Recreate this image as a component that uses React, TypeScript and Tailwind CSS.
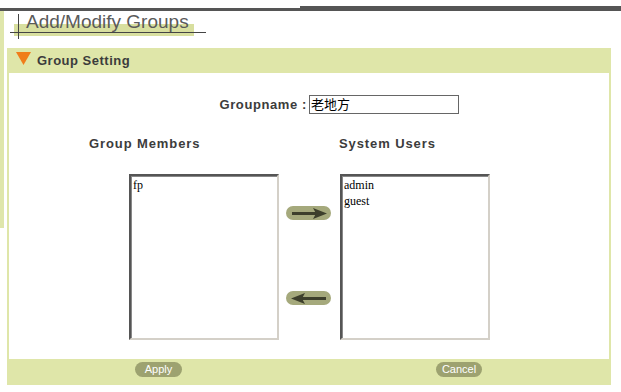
import React from "react";

const Arrow = ({ dir }: { dir: "right" | "left" }) => (
  <div className="w-[45px] h-[14px] rounded-full bg-[#a5a97c] flex items-center justify-center">
    <svg width="40" height="12" viewBox="0 0 40 12">
      {dir === "right" ? (
        <g fill="#3d3f2c">
          <rect x="3" y="5" width="26" height="3" />
          <polygon points="24,1 38,6.5 24,12 27,6.5" />
        </g>
      ) : (
        <g fill="#3d3f2c">
          <rect x="11" y="5" width="26" height="3" />
          <polygon points="16,1 2,6.5 16,12 13,6.5" />
        </g>
      )}
    </svg>
  </div>
);

const ListBox = ({ items }: { items: string[] }) => (
  <div className="w-[150px] h-[166px] bg-white border-2 border-t-[#555] border-l-[#555] border-r-[#d4d0c8] border-b-[#d4d0c8] shadow-[inset_1px_1px_0_#888]">
    <div className="pl-[2px] pt-[1px] text-[12px] leading-[16px] text-black" style={{ fontFamily: '"Liberation Serif", "DejaVu Serif", serif' }}>
      {items.map((i) => (
        <div key={i}>{i}</div>
      ))}
    </div>
  </div>
);

export default function App() {
  const sans = { fontFamily: '"Liberation Sans", Arial, sans-serif' };
  return (
    <div className="w-[621px] h-[392px] bg-white overflow-hidden" style={sans}>
      {/* top bar */}
      <div className="flex items-end h-[11px] pt-[6px]">
        <div className="w-[300px] h-[3px] bg-[#555]" />
        <div className="flex-1 h-[5px] bg-[#555]" />
      </div>
      <div className="flex">
        <div className="w-[4px] h-[217px] bg-[#dfe6ab]" />
        <div className="w-[3px]" />
        <div className="w-[604px]">
          {/* title */}
          <div className="relative h-[37px]">
            <div className="absolute left-[7px] top-[13px] w-[180px] h-[12px] bg-[#d8df9f]" />
            <div className="absolute left-[3px] top-[21px] w-[196px] h-px bg-[#444]" />
            <div className="absolute left-[11px] top-[3px] w-px h-[25px] bg-[#444]" />
            <div className="absolute left-[19px] top-0 text-[19px] leading-[22px] text-[#5a5a5a]">Add/Modify Groups</div>
          </div>
          {/* panel */}
          <div className="w-[604px]">
            <div className="h-[25px] bg-[#dfe6a9] flex items-center">
              <svg width="15" height="13" viewBox="0 0 15 13" className="ml-[9px] mb-[4px]">
                <polygon points="0,0 15,0 7.5,13" fill="#f07d1a" />
              </svg>
              <span className="ml-[6px] text-[13px] font-bold text-[#3c3c3c] tracking-[0.5px]">Group Setting</span>
            </div>
            <div className="h-[286px] border-x-2 border-[#dfe6a9] bg-white flex flex-col">
              <div className="flex items-center mt-[22px]">
                <div className="w-[298px] text-right text-[13px] font-bold text-[#3c3c3c] tracking-[0.6px]">Groupname :</div>
                <div className="ml-[2px] w-[150px] h-[19px] border border-[#666] flex items-center px-[1px] text-[13px] text-black" style={{ fontFamily: '"Liberation Sans", "Noto Sans CJK TC", sans-serif' }}>
                  老地方
                </div>
              </div>
              <div className="flex mt-[19px] h-[16px] text-[13px] font-bold text-[#3c3c3c] tracking-[0.9px]">
                <div className="ml-[80px] w-[250px]">Group Members</div>
                <div>System Users</div>
              </div>
              <div className="flex mt-[24px]">
                <div className="ml-[120px]">
                  <ListBox items={["fp"]} />
                </div>
                <div className="w-[61px] pl-[7px] pt-[32px] flex flex-col gap-[71px]">
                  <Arrow dir="right" />
                  <Arrow dir="left" />
                </div>
                <ListBox items={["admin", "guest"]} />
              </div>
            </div>
            <div className="h-[26px] bg-[#dfe6a9] flex items-start pt-[3px]">
              <div className="ml-[128px] w-[47px] h-[15px] rounded-full bg-[#9da270] text-white text-[11px] leading-[15px] text-center">Apply</div>
              <div className="ml-[254px] w-[46px] h-[15px] rounded-full bg-[#9da270] text-white text-[11px] leading-[15px] text-center">Cancel</div>
            </div>
          </div>
        </div>
      </div>
    </div>
  );
}
